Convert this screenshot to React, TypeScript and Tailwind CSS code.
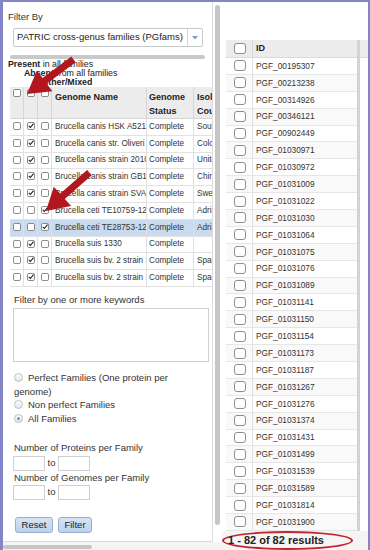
import React from "react";

function SmallCb({ checked }: { checked?: boolean }) {
  return (
    <svg width="8" height="8" viewBox="0 0 8 8" className="block">
      <rect x="0.5" y="0.5" width="7" height="7" rx="1.3" fill="white" stroke="#6e6e6e" strokeWidth="0.8" />
      {checked && <path d="M1.7 3.9 L3.4 5.5 L6.5 1.6" fill="none" stroke="#1f1f1f" strokeWidth="1.1" />}
    </svg>
  );
}

function Radio({ on }: { on?: boolean }) {
  return (
    <span className="inline-block w-[9px] h-[9px] rounded-full border border-[#b9bfc8] bg-gradient-to-b from-[#fdfdfd] to-[#e3e6ea] align-[-1px] mr-[5px] relative">
      {on && <span className="absolute left-[2px] top-[2px] w-[3px] h-[3px] rounded-full bg-[#6f97c8]" />}
    </span>
  );
}

const leftRows: { name: string; status: string; country: string; cb: [boolean, boolean, boolean]; sel?: boolean }[] = [
  { name: "Brucella canis HSK A5214", status: "Complete", country: "South Korea", cb: [false, true, false] },
  { name: "Brucella canis str. Oliveri", status: "Complete", country: "Colombia", cb: [false, true, false] },
  { name: "Brucella canis strain 2010009751", status: "Complete", country: "United States", cb: [false, true, false] },
  { name: "Brucella canis strain GB1", status: "Complete", country: "China", cb: [false, true, false] },
  { name: "Brucella canis strain SVA13", status: "Complete", country: "Sweden", cb: [false, true, false] },
  { name: "Brucella ceti TE10759-12", status: "Complete", country: "Adriatic", cb: [false, false, true] },
  { name: "Brucella ceti TE28753-12", status: "Complete", country: "Adriatic", cb: [false, false, true], sel: true },
  { name: "Brucella suis 1330", status: "Complete", country: "", cb: [false, true, false] },
  { name: "Brucella suis bv. 2 strain Bd", status: "Complete", country: "Spain", cb: [false, true, false] },
  { name: "Brucella suis bv. 2 strain Bd", status: "Complete", country: "Spain", cb: [false, true, false] },
];

const ids = [
  "PGF_00195307", "PGF_00213238", "PGF_00314926", "PGF_00346121", "PGF_00902449", "PGF_01030971",
  "PGF_01030972", "PGF_01031009", "PGF_01031022", "PGF_01031030", "PGF_01031064", "PGF_01031075",
  "PGF_01031076", "PGF_01031089", "PGF_01031141", "PGF_01031150", "PGF_01031154", "PGF_01031173",
  "PGF_01031187", "PGF_01031267", "PGF_01031276", "PGF_01031374", "PGF_01031431", "PGF_01031499",
  "PGF_01031539", "PGF_01031589", "PGF_01031814", "PGF_01031900",
];

export default function App() {
  return (
    <div className="relative w-[370px] h-[550px] overflow-hidden bg-white border-t-2 border-l-[3px] border-r-2 border-[#8286c9] font-['Liberation_Sans',Arial,sans-serif] text-[#333] flex">
      {/* LEFT */}
      <div className="w-[219px] flex flex-col shrink-0">
        <div className="flex h-[540px]">
          <div className="w-[210px] h-[540px] border-r border-b border-[#dcdcdc] overflow-hidden flex flex-col bg-white">
            <div className="pl-[5px] pt-[9px] text-[9.5px] leading-[12px] text-[#333]">Filter By</div>
            <div className="ml-[10px] mt-[5px] w-[190px] h-[19px] border border-[#c8c8c8] rounded-[2px] flex items-center bg-white">
              <div className="flex-1 pl-[3px] text-[9.5px] whitespace-nowrap text-[#222]">PATRIC cross-genus families (PGfams)</div>
              <div className="w-[15px] h-full border-l border-[#d4d4d4] flex items-center justify-center">
                <svg width="6" height="4" viewBox="0 0 6 4"><path d="M0 0 L6 0 L3 3.5 Z" fill="#7d9cc6" /></svg>
              </div>
            </div>
            <div className="ml-[7px] mt-[8px] w-[195px] h-[4px] rounded-full bg-[#c9c9c9]" />
            <div className="mt-[1px] text-[8.8px] leading-[9px] text-[#222] whitespace-nowrap">
              <div className="pl-[5px]"><b>Present</b> in all families</div>
              <div className="pl-[21px]"><b>Absent</b> from all families</div>
              <div className="pl-[37px]"><b>Either/Mixed</b></div>
            </div>
            {/* genome table */}
            <div className="ml-[7px] w-[260px] text-[8.2px] text-[#333]">
              <div className="flex h-[32px] bg-[#ececec] border-b border-[#d6d6d6] font-bold text-[9px] text-[#222] leading-[14px]">
                {[0, 1, 2].map((i) => (
                  <div key={i} className="w-[14px] h-full border-r border-[#d6d6d6] flex justify-center pt-[2px]">
                    <SmallCb />
                  </div>
                ))}
                <div className="w-[95px] h-full border-r border-[#d6d6d6] pl-[3px] pt-[3px]">Genome Name</div>
                <div className="w-[47px] h-[32px] border-r border-[#d6d6d6] pl-[2px] pt-[3px]">Genome<br />Status</div>
                <div className="w-[60px] pl-[3px] pt-[3px]">Isolation<br />Country</div>
              </div>
              {leftRows.map((r, idx) => (
                <div key={idx} className={`flex h-[16.8px] border-b border-[#e2e2e2] ${r.sel ? "bg-[#c9dbef]" : "bg-white"}`}>
                  {r.cb.map((c, i) => (
                    <div key={i} className="w-[14px] h-full border-r border-[#e0e0e0] flex justify-center pt-[3px]">
                      <SmallCb checked={c} />
                    </div>
                  ))}
                  <div className="w-[95px] h-full border-r border-[#e0e0e0] pl-[3px] flex items-center overflow-hidden whitespace-nowrap">{r.name}</div>
                  <div className="w-[47px] h-full border-r border-[#e0e0e0] pl-[2px] flex items-center whitespace-nowrap overflow-hidden">{r.status}</div>
                  <div className="w-[60px] pl-[3px] flex items-center whitespace-nowrap overflow-hidden">{r.country}</div>
                </div>
              ))}
            </div>
            <div className="ml-[11px] mt-[7px] text-[9.5px] leading-[12px]">Filter by one or more keywords</div>
            <div className="ml-[10px] mt-[2px] w-[196px] h-[54px] border border-[#cfcfcf] bg-white shrink-0" />
            <div className="ml-[11px] mt-[9.5px] w-[185px] text-[9.5px] leading-[13.5px]">
              <div><Radio />Perfect Families (One protein per genome)</div>
              <div><Radio />Non perfect Families</div>
              <div><Radio on />All Families</div>
            </div>
            <div className="ml-[11px] mt-[16.5px] text-[9.5px] leading-[12px]">Number of Proteins per Family</div>
            <div className="ml-[10px] mt-[2px] flex items-center h-[15px] text-[9.5px]">
              <div className="w-[32px] h-[15px] border border-[#cfcfcf] bg-white" />
              <span className="w-[13px] text-center">to</span>
              <div className="w-[32px] h-[15px] border border-[#cfcfcf] bg-white" />
            </div>
            <div className="ml-[11px] mt-[1px] text-[9.5px] leading-[12px]">Number of Genomes per Family</div>
            <div className="ml-[10px] mt-[1px] flex items-center h-[15px] text-[9.5px]">
              <div className="w-[32px] h-[15px] border border-[#cfcfcf] bg-white" />
              <span className="w-[13px] text-center">to</span>
              <div className="w-[32px] h-[15px] border border-[#cfcfcf] bg-white" />
            </div>
            <div className="ml-[12px] mt-[17px] flex gap-[5px]">
              <div className="w-[38px] h-[16px] rounded-[3px] border border-[#93aed0] bg-gradient-to-b from-[#d6e4f5] to-[#bcd2ec] text-[9.5px] text-[#222] flex items-center justify-center">Reset</div>
              <div className="w-[34px] h-[16px] rounded-[3px] border border-[#93aed0] bg-gradient-to-b from-[#d6e4f5] to-[#bcd2ec] text-[9.5px] text-[#222] flex items-center justify-center">Filter</div>
            </div>
          </div>
          <div className="w-[9px] h-full bg-white pt-[3px] pl-[2px]">
            <div className="w-[5px] h-[520px] rounded-full bg-[#c6c6c6]" />
          </div>
        </div>
        <div className="h-[8px] bg-[#f4f4f6] pt-[3px]">
          <div className="w-[89px] h-[4px] rounded-full bg-[#c6c6c6]" />
        </div>
      </div>

      {/* RIGHT */}
      <div className="flex-1 flex flex-col bg-white">
        <div className="h-[38px] shrink-0" />
        <div className="ml-[4px] flex h-[491px] shrink-0">
          <div className="w-[131px] flex flex-col">
            <div className="flex h-[18px] bg-[#ececec] border-b border-[#dadada] shrink-0">
              <div className="w-[27px] h-full border-r border-[#d8d8d8] flex items-center pl-[8px]">
                <div className="w-[12px] h-[11px] rounded-[3px] border border-[#8f8f8f] bg-white" />
              </div>
              <div className="pl-[3px] flex items-center text-[9px] font-bold text-[#222]">ID</div>
            </div>
            {ids.map((id, i) => (
              <div key={id} className={`flex h-[16.9px] shrink-0 border-b border-[#e6e6e6] ${i % 2 === 1 ? "bg-[#f9f9f9]" : "bg-white"}`}>
                <div className="w-[27px] h-full border-r border-[#e0e0e0] flex items-center pl-[8px]">
                  <div className="w-[12px] h-[11px] rounded-[3px] border border-[#8f8f8f] bg-white" />
                </div>
                <div className="pl-[3px] flex items-center text-[8.3px] text-[#333]">{id}</div>
              </div>
            ))}
          </div>
          <div className="w-[3px] bg-[#d3d3d3]" />
          <div className="flex-1">
            <div className="h-[18px] bg-[#ececec] border-b border-[#dadada]" />
          </div>
        </div>
        <div className="flex-1 bg-[#f5f5f5] flex items-start">
          <div className="w-[131px] h-[19px] rounded-[50%] border-2 border-[#c0262d] pl-[4px] flex items-center text-[11px] font-bold text-[#222] whitespace-nowrap">
            1 - 82 of 82 results
          </div>
        </div>
      </div>

      {/* ARROWS */}
      <svg className="absolute left-[-3px] top-[-2px] pointer-events-none" width="370" height="550" viewBox="0 0 370 550">
        <polygon points="27,94 52.4,91.3 46.7,83.7 75.6,62.2 71.4,56.6 42.6,78.1 36.9,70.4" fill="#b3171e" />
        <polygon points="46,211 71.1,206.1 64.8,199.0 91.7,175.2 87.1,169.9 60.1,193.8 53.8,186.7" fill="#b3171e" />
      </svg>
    </div>
  );
}
